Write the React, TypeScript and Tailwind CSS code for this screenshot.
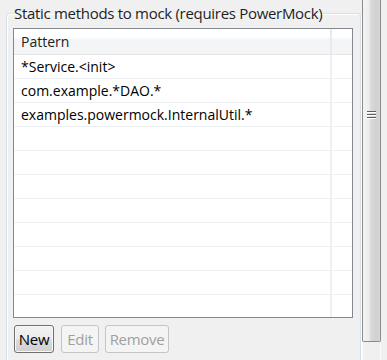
import React from "react";

const ROWS = [
  "*Service.<init>",
  "com.example.*DAO.*",
  "examples.powermock.InternalUtil.*",
  "", "", "", "", "", "", "", "",
];

const font = "font-['Segoe_UI','Open_Sans',sans-serif]";

function Grip() {
  return (
    <div className="flex flex-col gap-[1px] w-[9px]">
      {[0, 1, 2].map((i) => (
        <div key={i} className="h-[2px] border-t border-[#5f5f5f] bg-white" />
      ))}
    </div>
  );
}

export default function App() {
  return (
    <div className={`w-[387px] h-[360px] bg-[#f0f0f0] overflow-hidden flex ${font} text-[14px] text-black`}>
      <div className="w-[362px] shrink-0">
        <fieldset className="ml-[6px] mt-[3px] w-[355px] border border-[#d5dfe5] rounded-[3px] px-[6px] pb-[40px] shadow-[inset_1px_1px_0_#ffffff,1px_1px_0_#ffffff]">
          <legend className="px-[1px] leading-[20px] text-[15px] tracking-[-0.3px] text-[#1e1e1e]">
            Static methods to mock (requires PowerMock)
          </legend>
          <div className="mt-[5px] w-[340px] h-[290px] border border-[#828790] bg-white overflow-hidden">
            <div className="flex h-[26px] border-b border-[#e5e5e5] bg-[linear-gradient(#ffffff_0%,#ffffff_35%,#f3f5f7_40%,#f3f5f7_100%)]">
              <div className="w-[316px] pl-[7px] pt-[3px] leading-[20px] text-[#1e1e1e]">Pattern</div>
              <div className="w-[2px] bg-[#e6eaee]" />
              <div className="flex-1" />
            </div>
            {ROWS.map((r, i) => (
              <div key={i} className="flex h-[24px] border-b border-[#edf0f3]">
                <div className="w-[316px] pl-[7px] leading-[23px] whitespace-nowrap">{r}</div>
                <div className="w-[2px] bg-[#eef1f4]" />
                <div className="flex-1" />
              </div>
            ))}
          </div>
          <div className="mt-[7px] ml-[1px] flex items-center text-[15px] tracking-[-0.3px]">
            <button className="w-[40px] h-[28px] rounded-[3px] border border-[#707070] bg-[linear-gradient(#f2f2f2,#ebebeb_50%,#dddddd_51%,#cfcfcf)] shadow-[inset_0_0_0_1px_#f8f8f8] leading-none">
              New
            </button>
            <button disabled className="ml-[7px] w-[38px] h-[28px] rounded-[3px] border border-[#c4c4c4] bg-[#f4f4f4] text-[#a0a0a0] leading-none">
              Edit
            </button>
            <button disabled className="ml-[6px] w-[64px] h-[28px] rounded-[3px] border border-[#c4c4c4] bg-[#f4f4f4] text-[#a0a0a0] leading-none">
              Remove
            </button>
          </div>
        </fieldset>
      </div>
      <div className="w-[19px] shrink-0 flex flex-col">
        <div className="h-[342px] border border-t-0 border-[#8a8a8a] rounded-b-[2px] bg-[linear-gradient(90deg,#f3f3f3_0%,#ededed_35%,#dadada_45%,#d0d0d0_80%,#d8d8d8_100%)] flex flex-col items-center pt-[111px]">
          <Grip />
        </div>
        <div className="flex-1 border-l border-r border-[#fbfbfb] bg-[#f0f0f0]" />
      </div>
      <div className="flex-1 bg-[#f0f0f0]" />
    </div>
  );
}
